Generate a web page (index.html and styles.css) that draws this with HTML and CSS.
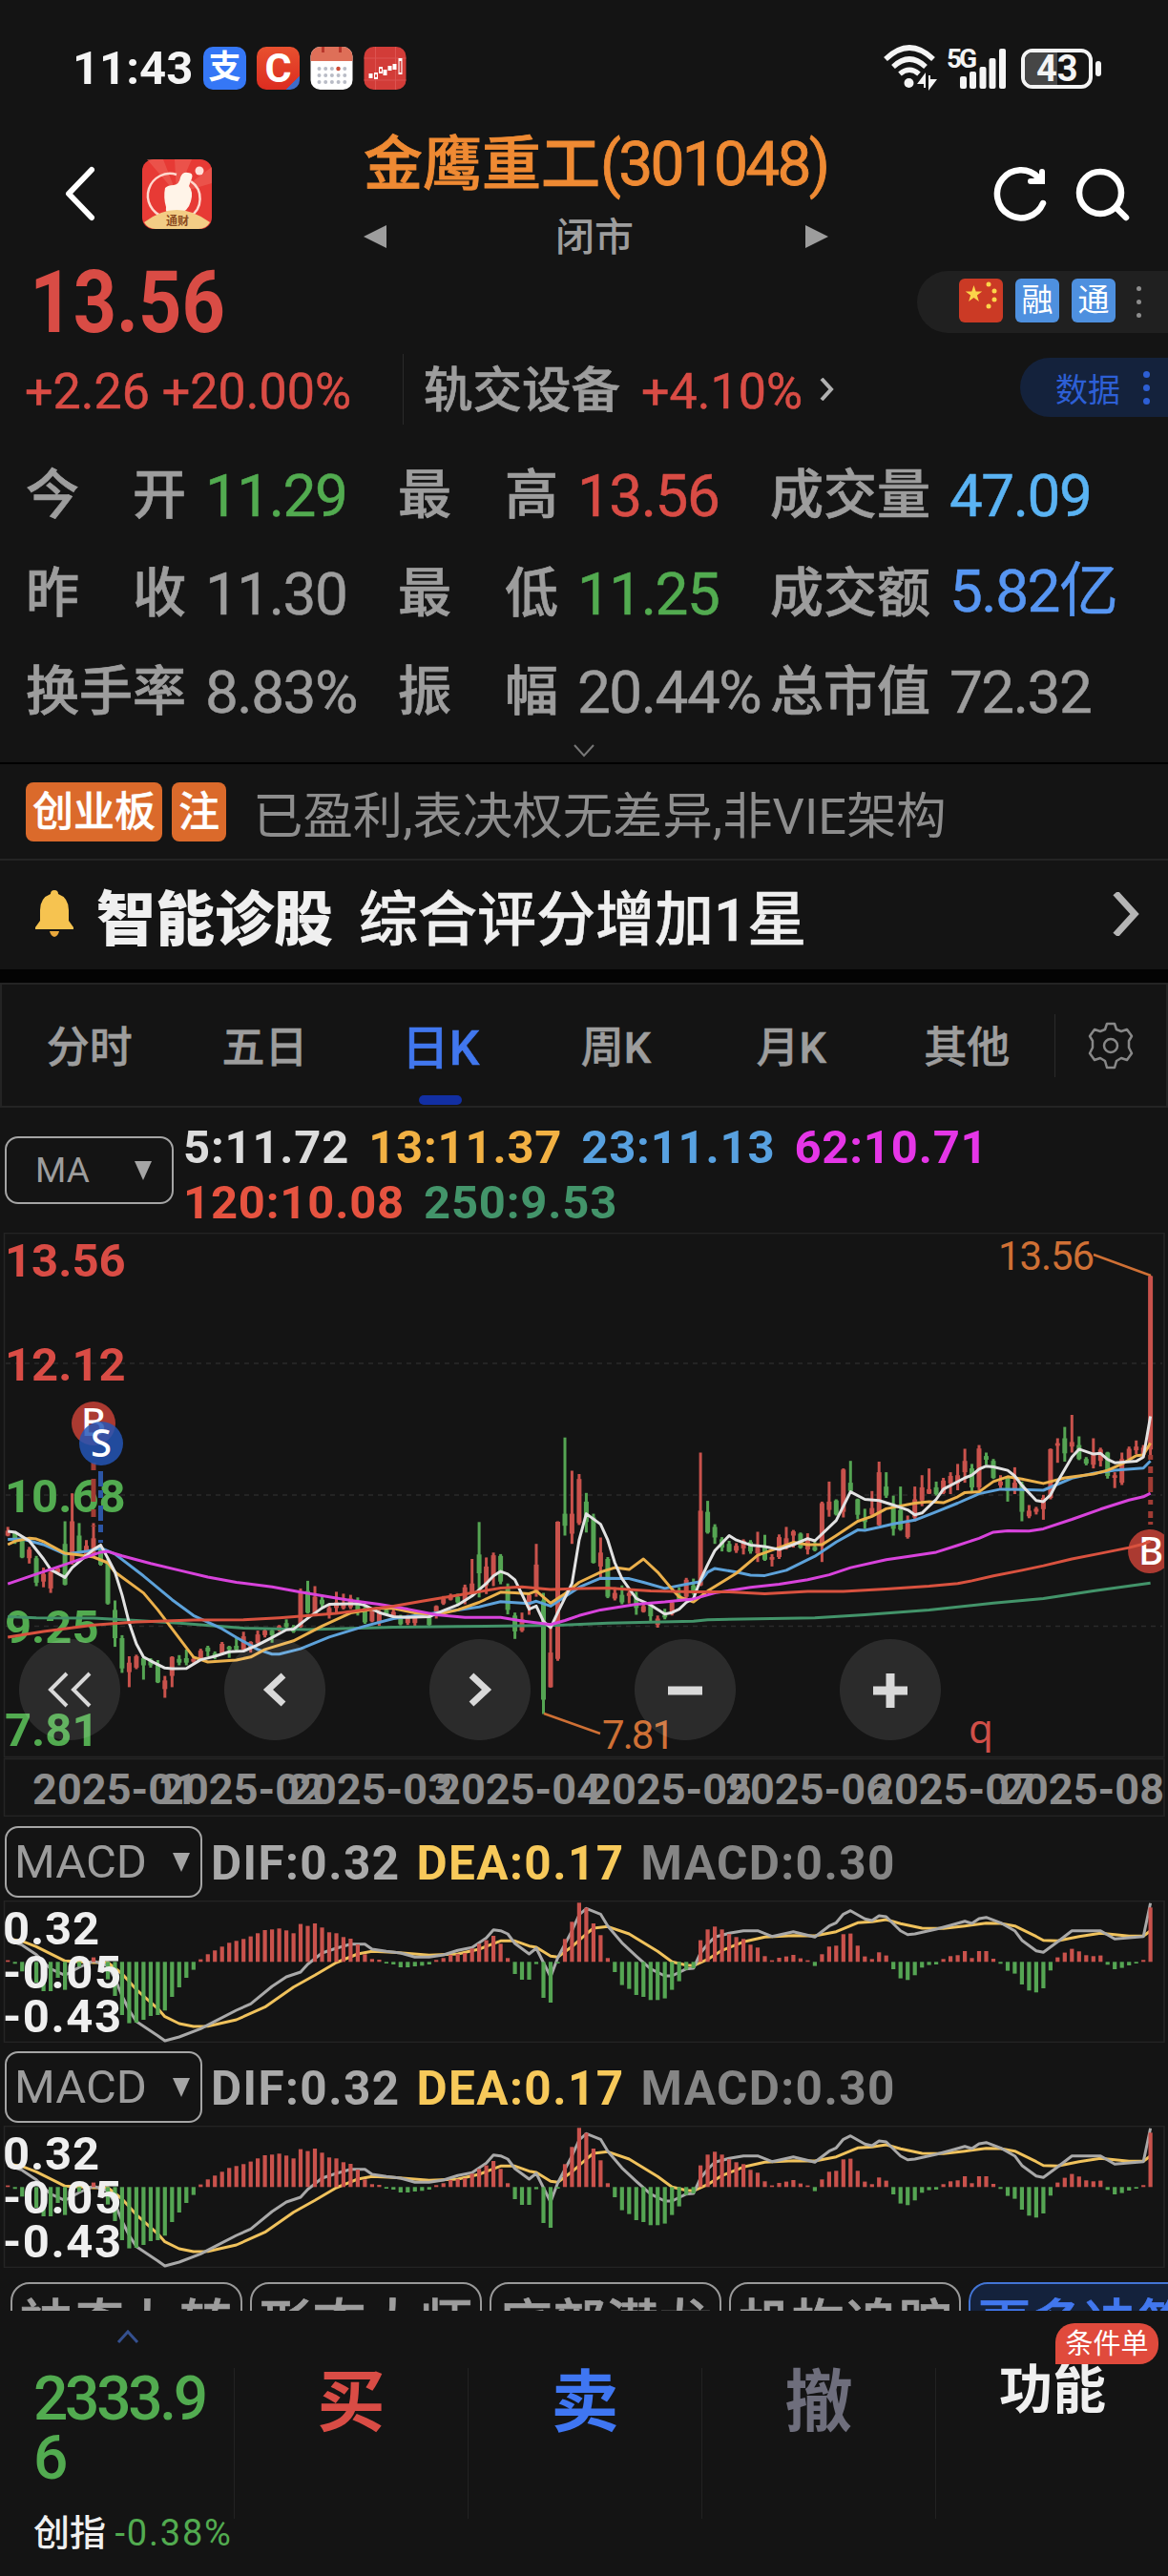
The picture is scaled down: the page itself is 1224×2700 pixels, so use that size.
FILE: index.html
```html
<!DOCTYPE html>
<html lang="zh-CN">
<head>
    <meta charset="UTF-8">
    <meta name="viewport" content="width=device-width, initial-scale=1.0">
    <title>金鹰重工(301048)</title>
    <link rel="stylesheet" href="styles.css">
</head>
<body>
    <div class="status-bar">
        <span class="clock">11:43</span>
        <div class="app-icon pay">支</div>
        <div class="app-icon car">C</div>
        <svg class="app-svg" viewBox="0 0 44 45">
            <rect width="44" height="45" rx="10" fill="#fff"/>
            <path d="M0 15V10A10 10 0 0 1 10 0H34A10 10 0 0 1 44 10V15Z" fill="#de6f58"/>
            <path d="M13 0V6M31 0V6" stroke="#b8382c" stroke-width="3"/>
            <path d="M9 23H38M9 30H38M9 37H38" stroke="#b9bcc6" stroke-width="4" stroke-linecap="round" stroke-dasharray="0 6.700"/>
            <circle cx="29" cy="23" r="2.200" fill="#cf4a33"/>
        </svg>
        <svg class="app-svg" viewBox="0 0 44 45">
            <rect width="44" height="45" rx="10" fill="#d23c38"/>
            <path d="M12 0V45M33 0V45M0 12H44M0 35H44" stroke="#dc5350" stroke-width="1"/>
            <path d="M5 28h4v5h-4zM20 24h4v6h-4zM30 18h4v6h-4z" fill="#fff"/>
            <path d="M12.500 27v7M17.500 21v7M27 20v5M38 12v17" stroke="#fff" stroke-width="4"/>
            <path d="M12.500 29v3M17.500 23v3M38 15v12" stroke="#d23c38" stroke-width="1.800"/>
        </svg>
        <svg class="signal" viewBox="0 0 230 50">
            <g fill="none" stroke="#f4f4f4" stroke-width="5.500">
                <path d="M2 16Q27 -8 52 16"/>
                <path d="M10 24Q27 8 44 24"/>
                <path d="M17 31.500Q27 23 37 31.500"/>
            </g>
            <circle cx="26.500" cy="41" r="5" fill="#f4f4f4"/>
            <path d="M43 46V33L37 41H43M48 33V46L54 38H48" stroke="#f4f4f4" stroke-width="2" fill="#f4f4f4"/>
            <text x="66" y="25" class="net">5G</text>
            <g fill="#f4f4f4">
                <rect x="80" y="34" width="7" height="13" rx="2"/>
                <rect x="90" y="29" width="7" height="18" rx="2"/>
                <rect x="100.500" y="24" width="7" height="23" rx="2"/>
                <rect x="110.500" y="15" width="7" height="32" rx="2"/>
                <rect x="121" y="5" width="7" height="42" rx="2"/>
            </g>
            <rect x="146" y="7" width="71" height="38" rx="10" fill="none" stroke="#f4f4f4" stroke-width="4"/>
            <path d="M182 9H156a8 8 0 0 0-8 8V35a8 8 0 0 0 8 8H182Z" fill="#464646"/>
            <rect x="222" y="18" width="6" height="16" rx="3" fill="#f4f4f4"/>
            <text x="160" y="39" class="battery">43</text>
        </svg>
    </div>

    <header class="header">
        <svg class="back" viewBox="0 0 34 58"><path d="M29 4L5 29L29 54" fill="none" stroke="#fff" stroke-width="6" stroke-linecap="round" stroke-linejoin="round"/></svg>
        <svg class="logo" viewBox="0 0 73 73">
            <rect width="73" height="73" rx="12" fill="#e73a35"/>
            <path d="M36 36L5 0H22ZM36 36L34 0H52ZM36 36L73 8V25Z" fill="#ee6258" opacity=".6"/>
            <path d="M36 16A22 22 0 0 0 22 60M50 60A22 22 0 0 0 51 23" fill="none" stroke="#ffd9cf" stroke-width="2.500"/>
            <path d="M24 30q3-3 9-3q6-1 7-8q2-6 8-5q6 0 4 6l-3 8q5 6 2 16q-3 11-13 13h-9q-5-1-4-7q-3-10-1-20Z" fill="#fff4e8"/>
            <circle cx="60" cy="12" r="4.500" fill="#ffdfd8"/>
            <path d="M2 66Q36 40 71 66Q67 73 59 73H14Q6 73 2 66Z" fill="#f3cd85"/>
            <text x="25" y="69" class="logo-text">通财</text>
        </svg>
        <div class="title-box">
            <h1>金鹰重工<span>(301048)</span></h1>
            <div class="market">
                <svg viewBox="0 0 24 24"><path d="M0 12L24 0V24Z" fill="#9d9d9d"/></svg>
                <span>闭市</span>
                <svg viewBox="0 0 24 24"><path d="M24 12L0 0V24Z" fill="#9d9d9d"/></svg>
            </div>
        </div>
        <svg class="tools" viewBox="0 0 150 64">
            <g fill="none" stroke="#fff" stroke-width="6.500" stroke-linecap="round">
                <path d="M48 15A25 25 0 1 0 53 42" />
                <path d="M52 9V19H40" stroke-width="6"/>
                <circle cx="113" cy="31" r="22"/>
                <path d="M130 47L140 57"/>
            </g>
        </svg>
    </header>

    <section class="quote">
        <div class="price-row">
            <strong class="price">13.56</strong>
            <div class="flag-pill">
                <svg viewBox="0 0 46 46">
                    <rect width="46" height="46" rx="6" fill="#cb3a25"/>
                    <path d="M15.500 7l2.200 6.400h6.500l-5.300 4 2 6.600-5.400-4-5.400 4 2-6.600-5.300-4h6.500z" fill="#fbd54a"/>
                    <g fill="#fbd54a"><circle cx="31" cy="6" r="2.500"/><circle cx="37" cy="13" r="2.500"/><circle cx="37" cy="22" r="2.500"/><circle cx="31" cy="29" r="2.500"/></g>
                </svg>
                <span class="mark">融</span>
                <span class="mark">通</span>
                <span class="dots"><i></i><i></i><i></i></span>
            </div>
        </div>
        <div class="change-row">
            <span class="change red">+2.26 +20.00%</span>
            <span class="sector">轨交设备</span>
            <span class="change red">+4.10%</span>
            <svg class="more" viewBox="0 0 16 24"><path d="M2 1L12 12L2 23" fill="none" stroke="#b0b0b0" stroke-width="4"/></svg>
            <div class="data-pill">数据<span class="dots"><i></i><i></i><i></i></span></div>
        </div>
    </section>

    <section class="stats">
        <div><label>今　开</label><b class="green">11.29</b></div>
        <div><label>最　高</label><b class="red">13.56</b></div>
        <div><label>成交量</label><b class="sky">47.09</b></div>
        <div><label>昨　收</label><b>11.30</b></div>
        <div><label>最　低</label><b class="green">11.25</b></div>
        <div><label>成交额</label><b class="blue">5.82亿</b></div>
        <div><label>换手率</label><b>8.83%</b></div>
        <div><label>振　幅</label><b>20.44%</b></div>
        <div><label>总市值</label><b>72.32</b></div>
    </section>
    <div class="expand">
        <svg viewBox="0 0 22 14"><path d="M1 1L11 12L21 1" fill="none" stroke="#777" stroke-width="2"/></svg>
    </div>

    <section class="notice">
        <span class="tag">创业板</span>
        <span class="tag">注</span>
        <p>已盈利,表决权无差异,非VIE架构</p>
    </section>
    <section class="diagnose">
        <svg class="bell" viewBox="0 0 40 49"><path d="M20 0q4 0 4 4q11 4 11 17v11l5 7v2H0v-2l5-7V21Q5 8 16 4q0-4 4-4Z" fill="#f6c350"/><path d="M15 43h10q-1 5-5 6q-4-1-5-6Z" fill="#e9a83c"/></svg>
        <strong>智能诊股</strong>
        <p>综合评分增加1星</p>
        <svg class="go" viewBox="0 0 30 46"><path d="M4 1L24 23L4 45" fill="none" stroke="#b5b5b5" stroke-width="7"/></svg>
    </section>

    <nav class="tabs">
        <a>分时</a>
        <a>五日</a>
        <a class="active">日K</a>
        <a>周K</a>
        <a>月K</a>
        <a>其他</a>
        <div class="setting">
            <svg viewBox="0 0 48 50"><path d="M20 2h8l2 6 5 2 6-2 5 7-3 5v7l3 6-5 7-6-2-5 3-2 7h-8l-2-7-5-3-6 2-5-7 3-6v-7l-3-5 5-7 6 2 5-2Z" fill="none" stroke="#888" stroke-width="2.500" stroke-linejoin="round"/><circle cx="24" cy="25" r="7" fill="none" stroke="#888" stroke-width="2.500"/></svg>
        </div>
    </nav>

    <section class="ma">
        <div class="select small">MA<span class="arrow"></span></div>
        <div class="ma-list">
            <span class="ma5">5:11.72</span><span class="ma13">13:11.37</span><span class="ma23">23:11.13</span><span class="ma62">62:10.71</span>
            <span class="ma120">120:10.08</span><span class="ma250">250:9.53</span>
        </div>
    </section>

    <section class="kline">
        <svg id="kline" viewBox="0 0 1224 612"></svg>
        <div class="controls">
            <button><svg viewBox="0 0 48 40"><path d="M21 3L4 20L21 37M45 3L28 20L45 37" stroke-width="4"/></svg></button>
            <button><svg viewBox="0 0 48 40"><path d="M33 5L17 20L33 35" stroke-width="7"/></svg></button>
            <button><svg viewBox="0 0 48 40"><path d="M15 5L31 20L15 35" stroke-width="7"/></svg></button>
            <button><svg viewBox="0 0 48 40"><path d="M6 21H42" stroke-width="9"/></svg></button>
            <button><svg viewBox="0 0 48 40"><path d="M6 21H42M24 3V39" stroke-width="9"/></svg></button>
        </div>
    </section>

    <section class="macd">
        <div class="macd-head">
            <div class="select">MACD<span class="arrow"></span></div>
            <span class="dif">DIF:0.32</span><span class="dea">DEA:0.17</span><span class="bar">MACD:0.30</span>
        </div>
        <svg class="macd-chart" viewBox="0 0 1224 149"></svg>
    </section>
    <section class="macd">
        <div class="macd-head">
            <div class="select">MACD<span class="arrow"></span></div>
            <span class="dif">DIF:0.32</span><span class="dea">DEA:0.17</span><span class="bar">MACD:0.30</span>
        </div>
        <svg class="macd-chart" viewBox="0 0 1224 149"></svg>
    </section>

    <div class="chips">
        <span>神奇九转</span><span>形态大师</span><span>底部潜龙</span><span>机构追踪</span><span class="on">更多决策</span>
    </div>

    <footer class="trade">
        <div class="index">
            <svg viewBox="0 0 24 16"><path d="M2 14L12 3L22 14" fill="none" stroke="#35508f" stroke-width="3"/></svg>
            <p class="index-value">2333.96</p>
            <p class="index-name">创指 <span>-0.38%</span></p>
        </div>
        <div class="action red">买</div>
        <div class="action sell">卖</div>
        <div class="action cancel">撤</div>
        <div class="action func">功能<span class="badge">条件单</span></div>
    </footer>
    <script src="chart.js"></script>
</body>
</html>
```
FILE: styles.css
```css
* {
    margin: 0;
    padding: 0;
    box-sizing: border-box;
}

body {
    width: 1224px;
    height: 2700px;
    overflow: hidden;
    background-color: #141414;
    color: #9d9d9d;
    font-family: Roboto, "Noto Sans CJK SC", sans-serif;
    font-weight: 500;
}

svg {
    display: block;
    flex-shrink: 0;
}

.red { color: #d94c45; }
.green { color: #52ab50; }
.sky { color: #5ab3f3; }
.blue { color: #5796f2; }

/* status bar */
.status-bar {
    height: 130px;
    padding: 12px 68px 0 76px;
    display: flex;
    align-items: center;
    gap: 11px;
}

.clock {
    width: 126px;
    font-size: 49px;
    font-weight: 700;
    color: #f4f4f4;
    white-space: nowrap;
}

.app-icon {
    width: 45px;
    height: 45px;
    border-radius: 10px;
    color: #fff;
    text-align: center;
    font-weight: 700;
}

.pay {
    background-color: #3577f6;
    font-size: 34px;
    line-height: 43px;
}

.car {
    background: linear-gradient(135deg, transparent 84%, #3f6cc8 84%), linear-gradient(#e8502f, #dc2c20);
    font-size: 43px;
    line-height: 44px;
}

.app-svg {
    width: 45px;
    height: 45px;
}

.signal {
    width: 230px;
    height: 50px;
    margin-left: auto;
}

.net {
    font-size: 28px;
    font-weight: 700;
    fill: #f4f4f4;
    letter-spacing: -3px;
}

.battery {
    font-size: 38px;
    font-weight: 700;
    fill: #f4f4f4;
}

/* header */
.header {
    height: 140px;
    padding: 0 34px 0 67px;
    display: flex;
    align-items: flex-start;
}

.back {
    width: 34px;
    height: 58px;
    margin-top: 44px;
}

.logo {
    width: 73px;
    height: 73px;
    margin: 37px 0 0 48px;
}

.logo-text {
    font-size: 12px;
    font-weight: 700;
    fill: #8a4a20;
}

.title-box {
    width: 487px;
    margin: 5px auto 0 159px;
}

h1 {
    height: 74px;
    line-height: 75px;
    font-size: 62px;
    font-weight: 500;
    color: #ef8a33;
    white-space: nowrap;
    -webkit-text-stroke: 0.8px;
}

h1 span {
    font-weight: 400;
    font-size: 64px;
    letter-spacing: -2.7px;
}

.market {
    display: flex;
    justify-content: space-between;
    align-items: center;
    height: 74px;
    font-size: 41px;
}

.market svg {
    width: 24px;
    height: 24px;
    margin-top: 4px;
}

.market span {
    margin: -3px 3px 0 0;
}

.tools {
    width: 150px;
    height: 64px;
    margin-top: 41px;
}

/* quote */
.price-row,
.change-row {
    height: 92px;
    display: flex;
    align-items: center;
}

.price {
    margin-left: 6px;
    padding: 2px 0 0 29px;
    font-size: 91px;
    font-weight: 700;
    color: #d94c45;
    transform: scaleX(0.87);
    transform-origin: left;
}

.flag-pill {
    width: 263px;
    height: 65px;
    margin-left: auto;
    padding-left: 44px;
    display: flex;
    align-items: center;
    gap: 13px;
    background-color: #202020;
    border-radius: 33px 0 0 33px;
}

.flag-pill svg,
.mark {
    width: 46px;
    height: 46px;
    margin-bottom: 2px;
}

.mark {
    border-radius: 6px;
    background-color: #4e90df;
    color: #fff;
    font-size: 33px;
    font-weight: 400;
    line-height: 46px;
    text-align: center;
}

.dots {
    display: flex;
    flex-direction: column;
    gap: 9px;
    margin-left: 9px;
}

.dots i {
    width: 5px;
    height: 5px;
    border-radius: 50%;
    background-color: #8d8d8d;
}

.change-row {
    padding-left: 26px;
}

.change {
    margin-top: 5px;
    font-size: 52px;
    font-weight: 400;
    white-space: nowrap;
    -webkit-text-stroke: 0.5px;
}

.sector {
    height: 74px;
    margin: 0 22px 0 auto;
    padding-left: 21px;
    border-left: 1px solid #2a2a2a;
    font-size: 51.5px;
    line-height: 78px;
    -webkit-text-stroke: 0.7px;
}

.more {
    width: 16px;
    height: 24px;
    margin-left: 18px;
}

.data-pill {
    width: 155px;
    height: 62px;
    margin: 0 0 4px 194px;
    padding-left: 37px;
    display: flex;
    align-items: center;
    background-color: #14223c;
    border-radius: 31px 0 0 31px;
    color: #2d5fd5;
    font-size: 34px;
    font-weight: 400;
}

.data-pill .dots {
    margin-left: 24px;
    gap: 7px;
}

.data-pill .dots i {
    width: 7px;
    height: 7px;
    background-color: #2d5fd5;
}

/* stats */
.stats {
    height: 309px;
    margin-top: 13px;
    padding-left: 27px;
    display: grid;
    grid-template-columns: 390px 390px 1fr;
    grid-template-rows: repeat(3, 103px);
}

.stats div {
    height: 103px;
    white-space: nowrap;
    line-height: 105px;
}

.stats label {
    display: inline-block;
    width: 188px;
    font-size: 56px;
    vertical-align: top;
    -webkit-text-stroke: 0.7px;
}

.stats b {
    display: inline-block;
    height: 103px;
    font-size: 62px;
    line-height: 106px;
    font-weight: 400;
    letter-spacing: -1.5px;
    vertical-align: top;
    -webkit-text-stroke: 0.5px;
}

.stats .blue {
    line-height: 100px;
}

.expand {
    height: 25px;
    padding-top: 4px;
    border-bottom: 2px solid #000;
}

.expand svg {
    width: 22px;
    height: 14px;
    margin: 0 auto;
}

.notice {
    height: 101px;
    padding-left: 27px;
    display: flex;
    align-items: center;
    border-bottom: 2px solid #242424;
}

.tag {
    height: 62px;
    margin-right: 10px;
    padding: 0 7px;
    border-radius: 8px;
    background-color: #db6a2b;
    color: #fff;
    font-size: 43px;
    line-height: 63px;
    -webkit-text-stroke: 0.4px;
}

.notice p {
    margin-left: 18px;
    font-size: 52.4px;
    font-weight: 400;
    color: #8d8d8d;
}

.diagnose {
    height: 128px;
    padding: 0 29px 4px 37px;
    display: flex;
    align-items: center;
    border-bottom: 14px solid #030303;
    color: #efefef;
    font-size: 62px;
}

.bell {
    width: 40px;
    height: 49px;
    margin: 0 24px 0 0;
}

.diagnose strong {
    margin-right: 27px;
    padding-top: 4px;
    font-weight: 900;
}

.diagnose p {
    padding-top: 4px;
    -webkit-text-stroke: 0.5px;
}

.go {
    width: 30px;
    height: 46px;
    margin: 2px 0 0 auto;
}

/* period tabs */
.tabs {
    height: 131px;
    display: flex;
    align-items: center;
    border: 2px solid #242424;
}

.tabs a {
    width: 184.5px;
    height: 127px;
    margin-left: -0.6px;
    line-height: 134px;
    font-size: 45px;
    text-align: center;
    -webkit-text-stroke: 0.5px;
}

.tabs .active {
    color: #4177ee;
    font-size: 50px;
}

.tabs .active::after {
    content: "";
    display: block;
    width: 45px;
    height: 10px;
    margin: -18px auto 0;
    border-radius: 5px;
    background-color: #122fa3;
}

.setting {
    flex: 1;
    height: 66px;
    display: flex;
    align-items: center;
    justify-content: center;
    border-left: 1px solid #2a2a2a;
}

.setting svg {
    width: 48px;
    height: 50px;
}

/* moving averages */
.ma {
    height: 131px;
    padding-left: 5px;
    display: flex;
    align-items: center;
}

.select {
    width: 207px;
    height: 75px;
    padding: 0 11px 0 8px;
    display: flex;
    align-items: center;
    justify-content: space-between;
    border: 2px solid #a5a5a5;
    border-radius: 14px;
    font-size: 49px;
    font-weight: 400;
    color: #9d9d9d;
}

.select.small {
    width: 177px;
    height: 71px;
    padding: 0 21px 0 30px;
    font-size: 37px;
}

.arrow {
    border: 9px solid transparent;
    border-top: 20px solid #a5a5a5;
    border-bottom: 0;
}

.ma-list {
    width: 900px;
    margin: 11px 0 0 10px;
    display: flex;
    flex-wrap: wrap;
    gap: 0 20px;
    font-size: 49px;
    font-weight: 700;
    line-height: 58px;
    letter-spacing: 0.8px;
}

.ma5 { color: #dcdcdc; }
.ma13 { color: #f2b143; }
.ma23 { color: #58a1e0; }
.ma62 { color: #e536e7; }
.ma120 { color: #e65340; }
.ma250 { color: #43946a; }

/* charts */
.kline {
    position: relative;
}

.kline text,
.macd text {
    font-weight: 700;
}

.kline .callout {
    font-size: 42px;
    font-weight: 400;
    fill: #cf7035;
}

.kline .note {
    font-family: "Noto Sans", sans-serif;
    font-size: 42px;
    font-weight: 400;
    fill: #d04f48;
}

.kline .marker {
    font-family: "Noto Sans", sans-serif;
    font-size: 40px;
    font-weight: 500;
    fill: #fff;
    text-anchor: middle;
}

/* zoom and pan buttons float over the candles */
.controls {
    position: absolute;
    left: 20px;
    top: 426px;
    display: flex;
    gap: 109px;
}

.controls button {
    width: 106px;
    height: 106px;
    display: flex;
    align-items: center;
    justify-content: center;
    border: none;
    border-radius: 50%;
    background-color: rgba(255, 255, 255, 0.1);
}

.controls svg {
    width: 48px;
    height: 40px;
    fill: none;
    stroke: #d9d9d9;
}

.macd {
    height: 236px;
}

.macd-head {
    height: 88px;
    padding: 7px 0 0 5px;
    display: flex;
    align-items: center;
    font-size: 49.5px;
    font-weight: 700;
    letter-spacing: 1.4px;
}

.macd-head .select {
    margin-right: 9px;
    letter-spacing: 0;
}

.macd-head > span {
    margin: 3px 17px 0 0;
}

.dif { color: #a9a9a9; }
.dea { color: #f7c95a; }
.bar { color: #858585; }

.chips {
    height: 46px;
    padding: 16px 0 0 11px;
    display: flex;
    gap: 8px;
    overflow: hidden;
}

.chips span {
    flex: 0 0 243px;
    height: 80px;
    border: 2px solid #999;
    border-radius: 20px;
    font-size: 56px;
    line-height: 86px;
    text-align: center;
    white-space: nowrap;
    -webkit-text-stroke: 0.7px;
}

.chips .on {
    border-color: #4375d5;
    background-color: #14223c;
    color: #4177ee;
}

/* trade bar */
.trade {
    height: 278px;
    display: grid;
    grid-template-columns: repeat(5, 245px);
}

.index {
    padding: 19px 0 0 35px;
}

.index svg {
    width: 24px;
    height: 16px;
    margin-left: 87px;
}

.index-value {
    width: 185px;
    margin-top: 27px;
    font-size: 64px;
    line-height: 62px;
    letter-spacing: -3.3px;
    word-break: break-all;
    color: #52ab50;
}

.index-name {
    margin-top: 16px;
    font-size: 38px;
    color: #efefef;
    white-space: nowrap;
}

.index-name span {
    font-weight: 400;
    letter-spacing: 1.8px;
    color: #52ab50;
}

.action {
    height: 158px;
    margin-top: 60px;
    border-left: 1px solid #222;
    font-size: 71px;
    font-weight: 700;
    line-height: 71px;
    text-align: center;
}

.sell {
    color: #3f76f2;
}

.cancel {
    color: #6e6e7c;
}

.func {
    position: relative;
    color: #efefef;
    font-size: 56px;
    line-height: 47px;
}

.badge {
    position: absolute;
    top: -47px;
    right: 11px;
    width: 108px;
    height: 43px;
    border-radius: 20px 20px 20px 0;
    background-color: #e04a3c;
    color: #fff;
    font-size: 29px;
    font-weight: 400;
    line-height: 44px;
}
```
FILE: chart.js
```js
const RED = '#c9524c';
const GREEN = '#55a553';
const STEP = 7.484;
const px = i => (8.2 + i * STEP).toFixed(1);

// color, high, body top, body bottom, low
const candles = `r785,795,808,810 g797,800,825,830 g812,820,866,868 r838,845,868,882 g862,868,933,942 r893,910,930,945
r898,905,948,960 r893,895,905,910 g770,830,938,940 r696,770,880,885 g775,808,850,855 r820,835,862,868
r775,815,860,865 g835,840,885,888 g870,875,988,991 g980,1005,1080,1103 g1072,1080,1160,1172 r1128,1145,1170,1210
r1124,1128,1158,1162 g1128,1133,1152,1190 g1133,1137,1152,1158 g1138,1150,1197,1199 r1180,1192,1215,1238 r1128,1130,1180,1210
g1125,1135,1145,1152 g1110,1133,1145,1152 r1130,1135,1142,1145 r1108,1113,1135,1140 g1100,1105,1115,1128 g1115,1120,1130,1136
r1090,1095,1120,1125 g1100,1103,1110,1132 g1080,1100,1110,1115 r1063,1075,1110,1113 r1088,1090,1105,1118 r1060,1070,1092,1098
r1055,1060,1072,1078 g1055,1060,1072,1092 r1045,1048,1058,1062 g1030,1040,1050,1055 g1045,1050,1063,1066 r948,960,1050,1053
g928,955,1012,1015 r942,970,1015,1018 g965,978,990,998 r990,1000,1018,1028 r957,985,1000,1016 r962,990,1000,1004
r965,975,998,1003 g972,985,1010,1020 g993,1000,1038,1042 r1000,1008,1035,1038 r1005,1010,1040,1047 g1000,1005,1015,1018
r1003,1010,1022,1025 g1018,1025,1043,1046 r1018,1025,1040,1045 r1020,1025,1040,1047 g1012,1015,1020,1022 g1018,1022,1045,1049
r993,995,1022,1028 r968,975,988,992 r962,970,978,980 g962,970,985,992 r938,945,980,990 r870,935,960,965
g772,858,908,972 r866,890,940,963 r853,860,915,942 g857,862,930,937 g935,945,1005,1017 g1012,1020,1062,1082
r1012,1030,1060,1064 r960,965,990,1018 r830,885,960,970 g960,980,1243,1281 r1040,1118,1210,1211 r770,771,1135,1140
g548,750,782,808 r636,750,803,830 r645,658,775,780 g695,718,772,800 g750,760,880,882 r813,853,890,920
g865,870,970,974 r945,960,975,980 g940,965,985,990 r955,960,968,988 g957,970,1000,1018 r985,995,1010,1012
g990,993,1022,1035 r1020,1028,1045,1052 g1002,1018,1025,1030 r982,985,1015,1020 g945,965,978,982 r920,925,970,975
g922,940,960,965 r588,742,940,942 g716,745,800,803 g778,785,813,830 g812,818,840,850 g822,830,850,852
r828,835,848,854 r818,822,842,858 g820,825,850,856 r798,840,855,878 g806,840,872,875 r857,865,872,890
r805,812,865,870 r785,815,840,845 r793,797,808,840 g800,803,840,843 r802,815,845,858 g822,838,847,850
r718,722,835,878 r665,718,740,758 g712,715,752,755 r630,633,745,760 g610,668,690,695 g710,712,753,765
g737,765,772,790 r690,735,752,758 r612,640,780,782 g640,678,702,708 g702,725,790,808 g678,740,792,795
r755,775,812,816 r678,712,760,770 r648,680,715,730 r630,685,697,698 g665,680,698,702 r655,662,695,698
r640,650,670,698 r618,648,670,688 r578,610,640,668 g618,630,680,692 r568,577,680,688 g588,597,607,620
g605,610,655,658 r648,665,675,682 g650,655,690,718 r627,668,685,698 g665,672,745,770 r727,742,757,762
r732,737,745,752 r700,708,738,766 r577,579,708,712 r550,563,570,615 g520,550,590,612 r488,560,572,588
g545,568,605,608 g600,605,617,622 r550,592,620,630 r575,580,610,625 g586,588,650,657 r640,648,655,682
r588,605,668,674 r572,578,605,608 r556,572,582,592 r568,575,595,600 r119,120,580,595`.split(/\s+/);

// moving averages: index,value
const averages = {
    '#43946a': '0,1023 4,1026 12,1027 18,1033 24,1040 33,1053 42,1057 48,1054 54,1051 63,1049 72,1047 77,1046 84,1040 96,1035 98,1031 113,1026 120,1018 129,1005 138,987 145,975 152,955 160,934',
    '#5da2da': '0,818 2,817 5,832 8,857 11,850 13,841 15,857 19,915 23,978 26,1020 30,1055 32,1078 35,1110 37,1122 38,1122 41,1108 45,1077 50,1048 54,1028 58,1018 63,1005 66,997 69,983 73,988 74,982 76,995 78,970 80,945 83,921 87,922 89,932 92,948 95,937 97,930 98,905 99,895 102,905 104,913 106,914 109,900 113,863 116,825 119,793 120,794 122,786 124,777 127,767 130,745 133,722 136,697 139,685 142,686 145,688 149,656 152,643 155,635 159,629 160,610',
    '#ebb04b': '0,832 1,823 3,815 4,817 5,824 8,855 11,862 12,865 14,880 15,905 19,960 21,1005 23,1055 26,1130 28,1143 32,1138 34,1130 36,1110 40,1087 44,1048 48,1013 52,1000 54,1001 57,1013 60,1018 63,1005 66,985 69,958 71,960 73,962 74,955 76,987 78,962 80,932 83,905 85,893 87,898 89,870 91,905 93,950 94,970 96,984 98,955 102,908 105,860 108,840 110,826 112,832 114,832 116,808 119,770 121,757 123,737 127,722 129,718 131,721 133,705 134,694 136,692 138,665 140,652 142,658 145,670 148,655 152,645 154,635 156,618 158,596 159,594 160,563',
    '#e2e2e2': '0,797 1,799 3,822 5,870 6,898 8,919 9,893 12,845 13,833 14,868 15,905 16,965 17,1040 18,1095 19,1130 20,1140 22,1159 23,1161 25,1160 27,1137 29,1128 31,1116 33,1114 35,1098 37,1078 39,1058 40,1056 42,1027 44,1000 45,990 49,988 50,993 52,1012 54,1023 56,1025 59,1023 61,1007 63,992 65,968 67,935 68,915 69,903 70,910 71,925 73,1003 74,995 75,1035 76,1052 77,1012 79,935 80,820 81,750 83,778 84,820 85,880 86,922 88,975 90,992 92,1016 93,1012 94,1003 95,985 96,975 97,925 98,885 99,848 101,808 102,820 104,833 106,837 108,845 110,832 112,816 113,822 116,768 117,730 118,692 120,712 122,715 124,727 126,740 127,753 128,748 130,712 131,685 134,655 135,648 136,632 137,624 138,626 140,635 141,650 142,675 144,715 145,718 146,700 147,665 149,600 150,579 152,592 153,590 154,606 155,615 158,611 159,600 160,492',
    '#d843dc': '0,936 4,910 8,885 13,852 14,850 16,862 20,882 24,900 28,918 32,932 37,944 41,958 44,967 48,980 52,990 56,1003 60,1018 64,1025 69,1025 72,1034 76,1044 78,1033 80,1020 83,1005 88,990 92,984 96,976 99,960 104,945 108,937 112,925 115,912 118,893 123,872 126,864 130,852 133,834 136,815 138,799 140,795 143,796 145,790 149,765 153,738 157,714 159,705 160,696',
    '#d9523f': '0,1077 5,1062 12,1045 18,1037 26,1032 33,1031 38,1026 41,1022 46,1014 54,995 58,982 64,963 69,947 72,944 76,951 80,948 84,947 90,955 96,957 101,957 106,962 112,956 117,956 123,950 129,942 133,935 135,928 138,915 142,900 145,888 149,870 153,855 157,840 159,830 160,823'
};

const line = (data, y, color) => {
    const points = data.split(' ').map(p => {
        const [i, v] = p.split(',').map(Number);
        return px(i) + ',' + y(v).toFixed(1);
    }).join(' ');
    return `<polyline points="${points}" fill="none" stroke="${color}" stroke-width="3" stroke-linejoin="round"/>`;
};
const text = (x, y, value, fill, extra = '') => `<text x="${x}" y="${y}" fill="${fill}" ${extra}>${value}</text>`;

function drawKline() {
    const y = v => v / 2.529 - 2;
    let out = '<path d="M4.500 .5H1220V549.500H4.500ZM4.500 551.500H1220V611.500H4.500Z" fill="none" stroke="#242424" stroke-width="1.500"/>';
    out += '<path d="M6 137H1218M6 275H1218M6 412.500H1218" stroke="#2a2a2a" stroke-width="1.500" stroke-dasharray="5 5"/>';
    [['13.56', 46], ['12.12', 155], ['10.68', 293], ['9.25', 430], ['7.81', 538]].forEach(([v, ty], i) => {
        out += text(5, ty, v, i < 2 ? '#d94c45' : '#52ab50', 'font-size="49"');
    });
    candles.forEach((c, i) => {
        const [high, top, bottom, low] = c.slice(1).split(',').map(v => y(Number(v)).toFixed(1));
        const color = c[0] === 'r' ? RED : GREEN;
        out += `<path d="M${px(i)} ${high}V${low}" stroke="${color}" stroke-width="3"/><path d="M${px(i)} ${top}V${bottom}" stroke="${color}" stroke-width="5"/>`;
    });
    // buy and sell marks
    out += '<path d="M98 241V308" stroke="#a13c34" stroke-width="5" stroke-dasharray="8 9 24 8"/>';
    out += '<path d="M105.500 250V325" stroke="#2c55a5" stroke-width="5" stroke-dasharray="16 4 8 8"/>';
    out += '<path d="M1205.700 233V306" stroke="#a13c34" stroke-width="5" stroke-dasharray="5 7 7 4 16 8"/>';
    out += '<circle cx="98" cy="200" r="23" fill="#ab3a31"/>' + text(98, 213, 'B', '#fff', 'class="marker"');
    out += '<circle cx="106" cy="221" r="23" fill="#2456b8" fill-opacity=".84"/>' + text(106, 235, 'S', '#fff', 'class="marker"');
    out += '<path d="M1220 316.500A23 23 0 1 0 1220 351.500Z" fill="#ab3a31"/>';
    out += text(1206, 348, 'B', '#fff', 'class="marker"');
    Object.entries(averages).forEach(([color, data]) => {
        out += line(data, y, color);
    });
    out += '<path d="M1146 23L1206 45M570 504L629 525" stroke="#cf7035" stroke-width="2.500"/>';
    out += text(1046, 39, '13.56', '', 'class="callout" textLength="101"');
    out += text(631, 541, '7.81', '', 'class="callout" textLength="76"');
    out += text(1015, 535, 'q', '', 'class="note"');
    [34, 167, 301, 457, 615, 760, 911, 1047].forEach((x, i) => {
        out += text(x, 599, '2025-0' + (i + 1), '#8d8d8d', 'font-size="45" textLength="173"');
    });
    document.getElementById('kline').innerHTML = out;
}

const hist = [5, -6, -30, -20, -65, -92, -92, -50, -88, -30, -15, -3, 14, 2, -55, -107, -167, -193, -191, -182, -170, -167, -153, -110, -80, -50, -25,
    8, 24, 36, 48, 60, 66, 72, 80, 90, 100, 102, 105, 99, 90, 119, 113, 121, 108, 93, 90, 78, 73, 55, 24, 9, 7, -5, -8, -17, -17, -14, -12, -8,
    6, 12, 22, 25, 28, 42, 57, 68, 82, 57, 12, -38, -56, -56, -7, -113, -128, -5, 72, 126, 186, 170, 121, 84, 12, -32, -73, -85, -104, -110, -120,
    -120, -115, -88, -61, -25, -20, 68, 102, 111, 102, 88, 78, 72, 54, 45, 18, 5, 13, 17, 22, 11, 5, -13, 24, 48, 51, 87, 89, 51, 17, 9, 30, 20,
    -23, -52, -57, -42, -18, -10, -8, 9, 18, 21, 34, 12, 34, 34, 10, -6, -28, -37, -71, -90, -96, -83, -27, 14, 29, 41, 33, 21, 18, 20, -9, -23,
    -19, -11, -5, 6, 171];
const dif = '0,400 2,415 4,445 6,490 8,510 10,485 12,465 14,480 15,520 16,575 17,620 18,655 21,700 22,716 24,704 27,678 29,655 32,620 34,600 37,545 39,515 41,500 42,475 44,440 46,425 48,412 50,412 51,428 53,435 55,440 57,453 59,453 61,446 63,432 65,423 67,393 68,367 69,370 70,380 71,410 73,443 74,425 75,470 76,515 77,455 79,370 80,320 81,300 83,318 84,355 86,408 88,450 90,490 92,512 93,512 95,490 96,488 97,440 98,412 99,390 101,378 103,370 105,370 107,388 110,373 113,390 115,355 116,345 117,318 118,307 120,333 121,338 122,323 123,326 125,370 126,382 127,380 130,365 132,353 134,340 135,347 136,332 137,328 139,345 141,370 142,400 144,433 145,438 147,405 149,370 153,370 155,396 157,392 159,388 160,283';
const dea = '0,395 2,403 4,420 8,465 12,470 14,470 16,505 18,555 21,615 22,640 24,662 26,671 28,670 32,650 36,610 40,547 43,510 46,470 49,443 51,435 54,438 59,447 63,443 66,428 69,402 71,402 73,418 74,422 76,450 77,453 79,420 81,380 82,362 84,357 87,380 91,435 93,468 95,478 96,480 98,460 100,432 103,405 106,390 110,385 113,386 116,373 119,345 121,342 123,335 125,348 128,362 131,363 134,355 137,346 139,347 141,355 144,388 145,400 147,402 150,388 153,378 157,387 159,387 160,370';

function drawMacd(svg) {
    const y = v => (v - 275) / 3;
    const zero = y(468);
    let out = '<path d="M4.500 .5H1220V148.500H4.500Z" fill="none" stroke="#242424" stroke-width="1.500"/>';
    out += line(dea, y, '#f0c25c') + line(dif, y, '#a9a9a9');
    hist.forEach((v, i) => {
        out += `<path d="M${px(i)} ${zero.toFixed(1)}v${(-v / 3).toFixed(1)}" stroke="${v > 0 ? RED : GREEN}" stroke-width="4.2"/>`;
    });
    ['0.32', '-0.05', '-0.43'].forEach((v, i) => {
        out += text(3, 46 + i * 46, v, '#efefef', `font-size="49" textLength="${i ? 124 : 101}"`);
    });
    svg.innerHTML = out;
}

drawKline();
document.querySelectorAll('.macd-chart').forEach(drawMacd);
```
